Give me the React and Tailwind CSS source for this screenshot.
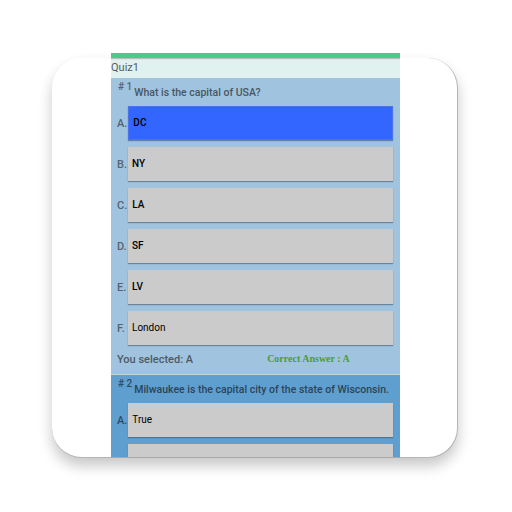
import React from "react";

const q1Options = [
  { key: "A", text: "DC", selected: true, bold: true },
  { key: "B", text: "NY", bold: true },
  { key: "C", text: "LA", bold: true },
  { key: "D", text: "SF", bold: true },
  { key: "E", text: "LV", bold: true },
  { key: "F", text: "London" },
];

const OptionRow = ({ opt, dark }) => (
  <div className="flex items-center h-[34px]">
    <span
      className={`text-[11px] font-medium mr-[1px] min-w-[10px] leading-none mt-[2px] ${
        dark ? "text-[#2e4b63]" : "text-[#56636f]"
      }`}
    >
      {opt.key ? `${opt.key}.` : ""}
    </span>
    <div
      className={`flex-1 h-full flex items-center pl-[4px] text-[10px] text-black ${
        opt.bold ? "font-medium" : "font-normal"
      } ${
        opt.selected
          ? "bg-[#3366ff] border border-[#4d74e6] shadow-[0_1px_1px_rgba(40,60,90,0.5)]"
          : "bg-[#cbcbcb] shadow-[0_1px_1px_rgba(60,80,100,0.55)]"
      }`}
    >
      {opt.text}
    </div>
  </div>
);

const QuestionHeader = ({ num, text, dark }) => (
  <div className="flex items-start">
    <span
      className={`text-[10px] font-medium leading-none ml-[1px] ${
        dark ? "text-[#2e4b63]" : "text-[#56636f]"
      }`}
    >
      # {num}
    </span>
    <span
      className={`ml-[2px] mt-[6px] text-[10.5px] font-medium leading-none ${
        dark ? "text-[#2b4559]" : "text-[#4a5662]"
      }`}
    >
      {text}
    </span>
  </div>
);

export default function App() {
  return (
    <div
      className="w-[512px] h-[512px] bg-white relative overflow-hidden"
      style={{ fontFamily: "Roboto, 'Liberation Sans', sans-serif" }}
    >
      {/* icon card */}
      <div className="absolute left-[52px] top-[58px] w-[406px] h-[400px]">
        <div className="absolute inset-0 rounded-[30px] bg-white border-r border-b border-[#b5b5b5] shadow-[0_8px_14px_rgba(0,0,0,0.22)]" />

        {/* phone screenshot */}
        <div className="absolute left-[59px] top-[-5px] w-[289px] h-[405px] overflow-hidden flex flex-col border-b border-[#a8a8a8]">
          <div className="h-[5px] shrink-0 bg-[#46cc8b] shadow-[0_1px_1px_rgba(0,0,0,0.2)] relative z-10" />
          <div className="h-[20px] shrink-0 bg-[#dff2ef] flex items-center text-[11px] text-[#555d63]">
            Quiz1
          </div>

          {/* question 1 */}
          <div className="h-[296px] shrink-0 bg-[#a0c4df] pl-[6px] pr-[7px] pt-[4px] flex flex-col">
            <QuestionHeader num="1" text="What is the capital of USA?" />
            <div className="mt-[7px] flex flex-col gap-[7px]">
              {q1Options.map((o) => (
                <OptionRow key={o.key} opt={o} />
              ))}
            </div>
            <div className="mt-[7px] flex items-center">
              <span className="text-[11px] font-medium text-[#4d5a66]">
                You selected: A
              </span>
              <span
                className="ml-[74px] -mt-[3px] text-[10px] font-bold text-[#4f9a3c]"
                style={{ fontFamily: "'Liberation Serif', serif" }}
              >
                Correct Answer : A
              </span>
            </div>
          </div>

          {/* question 2 */}
          <div className="flex-1 bg-[#5f9fd0] pl-[6px] pr-[7px] pt-[4px] flex flex-col border-t border-[#c2d5e3]">
            <QuestionHeader
              dark
              num="2"
              text="Milwaukee is the capital city of the state of Wisconsin."
            />
            <div className="mt-[7px] flex flex-col gap-[7px]">
              <OptionRow dark opt={{ key: "A", text: "True" }} />
              <OptionRow dark opt={{ key: "", text: "" }} />
            </div>
          </div>
        </div>
      </div>
    </div>
  );
}
